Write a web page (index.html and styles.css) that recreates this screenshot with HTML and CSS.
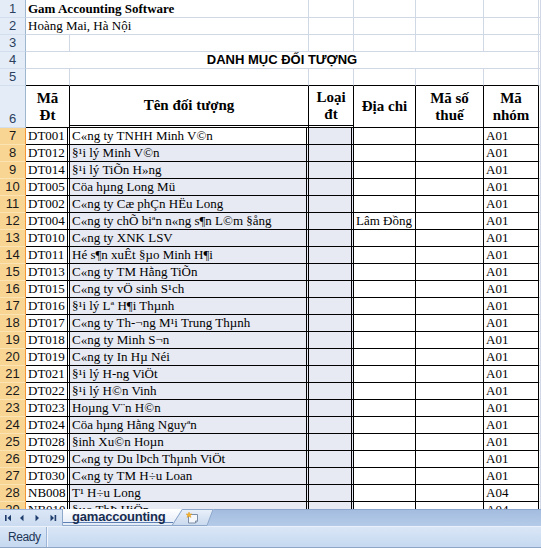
FILE: index.html
```html
<!DOCTYPE html>
<html lang="vi">
<head>
<meta charset="utf-8">
<title>gamaccounting</title>
<link rel="stylesheet" href="styles.css">
</head>
<body>
<div class="app">
  <div class="sheet">
    <div class="row r1">
      <div class="c rh">1</div>
      <div class="c ab bold">Gam Accounting Software</div>
      <div class="c cc"></div><div class="c cd"></div><div class="c ce"></div><div class="c cf"></div><div class="c cg"></div>
    </div>
    <div class="row">
      <div class="c rh">2</div>
      <div class="c ab">Hoàng Mai, Hà Nội</div>
      <div class="c cc"></div><div class="c cd"></div><div class="c ce"></div><div class="c cf"></div><div class="c cg"></div>
    </div>
    <div class="row">
      <div class="c rh">3</div>
      <div class="c ca"></div><div class="c cb"></div><div class="c cc"></div><div class="c cd"></div><div class="c ce"></div><div class="c cf"></div><div class="c cg"></div>
    </div>
    <div class="row">
      <div class="c rh">4</div>
      <div class="c title">DANH MỤC ĐỐI TƯỢNG</div>
      <div class="c cg"></div>
    </div>
    <div class="row r5">
      <div class="c rh">5</div>
      <div class="c ca k"></div><div class="c cb k"></div><div class="c cc k"></div><div class="c cd k"></div><div class="c ce k"></div><div class="c cf k"></div><div class="c cg"></div>
    </div>
    <div class="row r6">
      <div class="c rh">6</div>
      <div class="c ca b h"><span>Mã<br>Đt</span></div>
      <div class="c cb b h dbb"><span>Tên đối tượng</span></div>
      <div class="c cc b h dbb"><span>Loại<br>đt</span></div>
      <div class="c cd b h"><span>Địa chi</span></div>
      <div class="c ce b h"><span>Mã số<br>thuế</span></div>
      <div class="c cf b h"><span>Mã<br>nhóm</span></div>
      <div class="c cg"></div>
    </div>

    <div class="row"><div class="c rh sel">7</div><div class="c ca b dr">DT001</div><div class="c cb b dr">C«ng ty TNHH Minh V©n</div><div class="c cc b dr sb"></div><div class="c cd b"></div><div class="c ce b"></div><div class="c cf b">A01</div><div class="c cg"></div></div>
    <div class="row"><div class="c rh sel">8</div><div class="c ca b dr">DT012</div><div class="c cb b dr sb">§¹i lý Minh V©n</div><div class="c cc b dr sb"></div><div class="c cd b"></div><div class="c ce b"></div><div class="c cf b">A01</div><div class="c cg"></div></div>
    <div class="row"><div class="c rh sel">9</div><div class="c ca b dr">DT014</div><div class="c cb b dr sb">§¹i lý TiÕn H»ng</div><div class="c cc b dr sb"></div><div class="c cd b"></div><div class="c ce b"></div><div class="c cf b">A01</div><div class="c cg"></div></div>
    <div class="row"><div class="c rh sel">10</div><div class="c ca b dr">DT005</div><div class="c cb b dr sb">Cöa hµng Long Mü</div><div class="c cc b dr sb"></div><div class="c cd b"></div><div class="c ce b"></div><div class="c cf b">A01</div><div class="c cg"></div></div>
    <div class="row"><div class="c rh sel">11</div><div class="c ca b dr">DT002</div><div class="c cb b dr sb">C«ng ty Cæ phÇn HËu Long</div><div class="c cc b dr sb"></div><div class="c cd b"></div><div class="c ce b"></div><div class="c cf b">A01</div><div class="c cg"></div></div>
    <div class="row"><div class="c rh sel">12</div><div class="c ca b dr">DT004</div><div class="c cb b dr sb">C«ng ty chÕ biªn n«ng s¶n L©m §ång</div><div class="c cc b dr sb"></div><div class="c cd b">Lâm Đồng</div><div class="c ce b"></div><div class="c cf b">A01</div><div class="c cg"></div></div>
    <div class="row"><div class="c rh sel">13</div><div class="c ca b dr">DT010</div><div class="c cb b dr sb">C«ng ty XNK LSV</div><div class="c cc b dr sb"></div><div class="c cd b"></div><div class="c ce b"></div><div class="c cf b">A01</div><div class="c cg"></div></div>
    <div class="row"><div class="c rh sel">14</div><div class="c ca b dr">DT011</div><div class="c cb b dr sb">Hé s¶n xuÊt §µo Minh H¶i</div><div class="c cc b dr sb"></div><div class="c cd b"></div><div class="c ce b"></div><div class="c cf b">A01</div><div class="c cg"></div></div>
    <div class="row"><div class="c rh sel">15</div><div class="c ca b dr">DT013</div><div class="c cb b dr sb">C«ng ty TM Hằng TiÕn</div><div class="c cc b dr sb"></div><div class="c cd b"></div><div class="c ce b"></div><div class="c cf b">A01</div><div class="c cg"></div></div>
    <div class="row"><div class="c rh sel">16</div><div class="c ca b dr">DT015</div><div class="c cb b dr sb">C«ng ty vÖ sinh S¹ch</div><div class="c cc b dr sb"></div><div class="c cd b"></div><div class="c ce b"></div><div class="c cf b">A01</div><div class="c cg"></div></div>
    <div class="row"><div class="c rh sel">17</div><div class="c ca b dr">DT016</div><div class="c cb b dr sb">§¹i lý Lª H¶i Thµnh</div><div class="c cc b dr sb"></div><div class="c cd b"></div><div class="c ce b"></div><div class="c cf b">A01</div><div class="c cg"></div></div>
    <div class="row"><div class="c rh sel">18</div><div class="c ca b dr">DT017</div><div class="c cb b dr sb">C«ng ty Th-¬ng M¹i Trung Thµnh</div><div class="c cc b dr sb"></div><div class="c cd b"></div><div class="c ce b"></div><div class="c cf b">A01</div><div class="c cg"></div></div>
    <div class="row"><div class="c rh sel">19</div><div class="c ca b dr">DT018</div><div class="c cb b dr sb">C«ng ty Minh S¬n</div><div class="c cc b dr sb"></div><div class="c cd b"></div><div class="c ce b"></div><div class="c cf b">A01</div><div class="c cg"></div></div>
    <div class="row"><div class="c rh sel">20</div><div class="c ca b dr">DT019</div><div class="c cb b dr sb">C«ng ty In Hµ Néi</div><div class="c cc b dr sb"></div><div class="c cd b"></div><div class="c ce b"></div><div class="c cf b">A01</div><div class="c cg"></div></div>
    <div class="row"><div class="c rh sel">21</div><div class="c ca b dr">DT021</div><div class="c cb b dr sb">§¹i lý H-ng ViÖt</div><div class="c cc b dr sb"></div><div class="c cd b"></div><div class="c ce b"></div><div class="c cf b">A01</div><div class="c cg"></div></div>
    <div class="row"><div class="c rh sel">22</div><div class="c ca b dr">DT022</div><div class="c cb b dr sb">§¹i lý H©n Vinh</div><div class="c cc b dr sb"></div><div class="c cd b"></div><div class="c ce b"></div><div class="c cf b">A01</div><div class="c cg"></div></div>
    <div class="row"><div class="c rh sel">23</div><div class="c ca b dr">DT023</div><div class="c cb b dr sb">Hoµng V¨n H©n</div><div class="c cc b dr sb"></div><div class="c cd b"></div><div class="c ce b"></div><div class="c cf b">A01</div><div class="c cg"></div></div>
    <div class="row"><div class="c rh sel">24</div><div class="c ca b dr">DT024</div><div class="c cb b dr sb">Cöa hµng Hằng Nguyªn</div><div class="c cc b dr sb"></div><div class="c cd b"></div><div class="c ce b"></div><div class="c cf b">A01</div><div class="c cg"></div></div>
    <div class="row"><div class="c rh sel">25</div><div class="c ca b dr">DT028</div><div class="c cb b dr sb">§inh Xu©n Hoµn</div><div class="c cc b dr sb"></div><div class="c cd b"></div><div class="c ce b"></div><div class="c cf b">A01</div><div class="c cg"></div></div>
    <div class="row"><div class="c rh sel">26</div><div class="c ca b dr">DT029</div><div class="c cb b dr sb">C«ng ty Du lÞch Thµnh ViÖt</div><div class="c cc b dr sb"></div><div class="c cd b"></div><div class="c ce b"></div><div class="c cf b">A01</div><div class="c cg"></div></div>
    <div class="row"><div class="c rh sel">27</div><div class="c ca b dr">DT030</div><div class="c cb b dr sb">C«ng ty TM H÷u Loan</div><div class="c cc b dr sb"></div><div class="c cd b"></div><div class="c ce b"></div><div class="c cf b">A01</div><div class="c cg"></div></div>
    <div class="row"><div class="c rh sel">28</div><div class="c ca b dr">NB008</div><div class="c cb b dr sb">T¹ H÷u Long</div><div class="c cc b dr sb"></div><div class="c cd b"></div><div class="c ce b"></div><div class="c cf b">A04</div><div class="c cg"></div></div>
    <div class="row"><div class="c rh sel">29</div><div class="c ca b dr">NB010</div><div class="c cb b dr sb">§µo ThÞ HiÖn</div><div class="c cc b dr sb"></div><div class="c cd b"></div><div class="c ce b"></div><div class="c cf b">A04</div><div class="c cg"></div></div>
  </div>

  <div class="tabbar">
    <div class="nav">
      <svg width="62" height="16" viewBox="0 0 62 16">
        <g fill="#1f3d6d">
          <rect x="5" y="5" width="1.6" height="6"/>
          <polygon points="7.5,8 11,4.8 11,11.2"/>
          <polygon points="20,8 23.5,4.8 23.5,11.2"/>
          <polygon points="39,8 35.5,4.8 35.5,11.2"/>
          <polygon points="54,8 50.5,4.8 50.5,11.2"/>
          <rect x="54.6" y="5" width="1.6" height="6"/>
        </g>
      </svg>
    </div>
    <div class="tabs">
      <svg class="tabshape" width="152" height="17" viewBox="0 0 152 17">
        <defs>
          <linearGradient id="tg" x1="0" y1="0" x2="0" y2="1">
            <stop offset="0" stop-color="#ffffff"/>
            <stop offset="1" stop-color="#e2ebf7"/>
          </linearGradient>
          <linearGradient id="ng" x1="0" y1="0" x2="0" y2="1">
            <stop offset="0" stop-color="#e9f0f9"/>
            <stop offset="1" stop-color="#c9d9ee"/>
          </linearGradient>
        </defs>
        <path d="M110 16.5 L120 0.5 H151 L145 16.5 Z" fill="url(#ng)" stroke="#8ea8cc"/>
        <path d="M0.5 0 V16.5 H110 L120.5 0" fill="url(#tg)" stroke="#8ea8cc"/>
        <line x1="1" y1="13.5" x2="111" y2="13.5" stroke="#5d7fb3"/>
        <g transform="translate(124 3)">
          <path d="M2.5 2.5 H11.5 V9 L9.5 11 H2.5 Z" fill="#f4f7fb" stroke="#7d8fa8"/>
          <path d="M9.5 11 V9 H11.5" fill="none" stroke="#7d8fa8"/>
          <polygon points="3,0 3.8,2 6,2 4.3,3.3 5,5.5 3,4.2 1,5.5 1.7,3.3 0,2 2.2,2" fill="#f3b32a" stroke="#d98a12" stroke-width="0.4"/>
        </g>
      </svg>
      <span class="tabname">gamaccounting</span>
    </div>
    <div class="fill"></div>
  </div>

  <div class="status">
    <div class="ready">Ready</div>
    <div class="srest"></div>
  </div>
</div>
</body>
</html>
```

FILE: styles.css
```css
html, body {
  margin: 0;
  padding: 0;
}
body {
  width: 541px;
  height: 548px;
  overflow: hidden;
  background: #ffffff;
  font-family: "Liberation Serif", "Times New Roman", serif;
}
.app {
  display: flex;
  flex-direction: column;
  width: 541px;
  height: 548px;
}
.sheet {
  height: 509px;
  flex: none;
  overflow: hidden;
}
.row {
  display: flex;
  height: 17px;
}
.row.r1 { height: 18px; }
.row.r6 { height: 42px; }

.c {
  box-sizing: border-box;
  flex: none;
  height: 100%;
  border-right: 1px solid #d0d7e5;
  border-bottom: 1px solid #d0d7e5;
  padding: 0 0 0 2px;
  white-space: nowrap;
  overflow: hidden;
  display: flex;
  align-items: flex-end;
  font-size: 13px;
  line-height: 16px;
  color: #000;
}
.rh {
  width: 26px;
  padding: 0;
  justify-content: center;
  background: #e4ecf7;
  border-right-color: #9eb6ce;
  border-bottom-color: #d2deee;
  font-family: "Liberation Sans", Arial, sans-serif;
  font-size: 13px;
  color: #2b3f5e;
}
.rh.sel {
  background: #f9d594;
  border-right-color: #f29536;
  border-bottom-color: #fce3b3;
  color: #1a1a1a;
}
.ca { width: 44px; }
.cb { width: 239px; }
.cc { width: 45px; }
.cd { width: 62px; }
.ce { width: 68px; }
.cf { width: 55px; }
.cg { flex: 1; padding: 0; }
.ab { width: 283px; }
.title {
  width: 513px;
  justify-content: center;
  align-items: center;
  padding: 0;
  font-family: "Liberation Sans", Arial, sans-serif;
  font-weight: bold;
  font-size: 13px;
}
.bold { font-weight: bold; }

.k { border-bottom-color: #000; }
.b {
  border-right-color: #000;
  border-bottom-color: #000;
}
.dr { border-right: 3px double #000; }
.dbb { border-bottom: 3px double #000; }
.sb { background: #e7eaf3; }

.h {
  justify-content: center;
  align-items: center;
  padding: 0;
  font-weight: bold;
  font-size: 15px;
  line-height: 17px;
  text-align: center;
  white-space: normal;
}

.tabbar {
  height: 17px;
  flex: none;
  display: flex;
  background: linear-gradient(#a3bcdf, #b4cae8);
}
.nav {
  width: 62px;
  height: 17px;
  flex: none;
  background: linear-gradient(#dbe7f6, #cbdbf0);
  box-sizing: border-box;
  border-top: 1px solid #9db5d8;
}
.nav svg { display: block; }
.tabs {
  position: relative;
  width: 152px;
  height: 17px;
  flex: none;
}
.tabshape {
  position: absolute;
  left: 0;
  top: 0;
  display: block;
}
.tabname {
  position: relative;
  display: block;
  padding-left: 10px;
  font-family: "Liberation Sans", Arial, sans-serif;
  font-weight: bold;
  font-size: 13px;
  line-height: 15px;
  letter-spacing: -0.2px;
  color: #172c50;
}
.fill {
  flex: 1;
  box-sizing: border-box;
  border-top: 1px solid #8aa6ce;
}
.status {
  flex: 1;
  display: flex;
  box-sizing: border-box;
  border-top: 1px solid #eaf1fa;
  border-bottom: 1px solid #8ea6c6;
  background: linear-gradient(#d9e6f6, #c6d9f0);
}
.ready {
  width: 47px;
  box-sizing: border-box;
  padding-left: 8px;
  border-right: 1px solid #9db5d6;
  display: flex;
  align-items: center;
  font-family: "Liberation Sans", Arial, sans-serif;
  font-size: 12px;
  letter-spacing: -0.4px;
  color: #1e3658;
}
.srest {
  flex: 1;
  border-left: 1px solid #f2f6fc;
}
```
